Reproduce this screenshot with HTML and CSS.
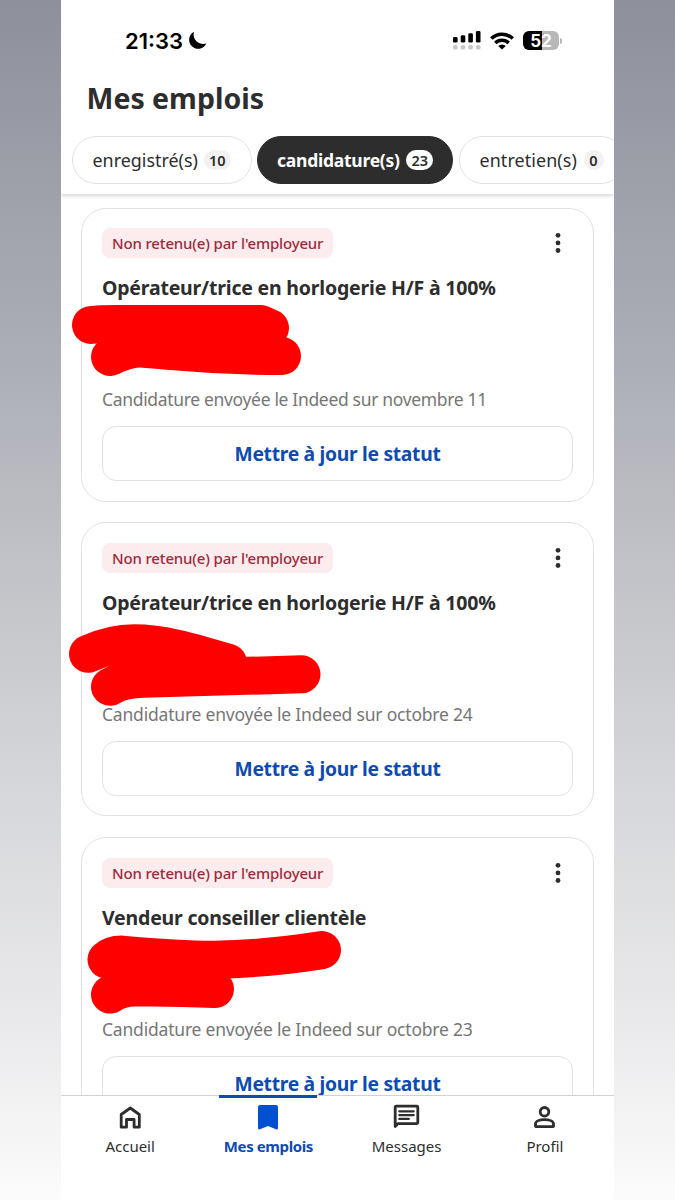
FILE: index.html
```
<!DOCTYPE html>
<html lang="fr">
<head>
    <meta charset="UTF-8">
    <meta name="viewport" content="width=device-width, initial-scale=1.0">
    <title>Mes emplois</title>
    <link rel="stylesheet" href="styles.css">
</head>
<body>
<div class="phone">

    <header class="header">
        <!-- Status bar -->
        <div class="status-bar">
            <span class="time">21:33</span>
            <svg class="moon" width="19" height="19" viewBox="0 0 19 19"><path d="M6 .8A9 9 0 1 0 18.3 12.6C10.500 14.500 4 8.500 6 .8z"/></svg>
            <div class="status-icons">
                <svg width="28" height="19" viewBox="0 0 28 19">
                    <rect x="0" y="6" width="4.6" height="5.6" rx="1.4"/>
                    <rect x="7.7" y="4.2" width="4.6" height="7.4" rx="1.4"/>
                    <rect x="15.3" y="2.2" width="4.6" height="9.4" rx="1.4"/>
                    <rect x="22.9" y="0" width="4.6" height="11.6" rx="1.4"/>
                    <g fill="#c9c9c9">
                        <rect x="0" y="14" width="4.6" height="4.6" rx="1.6"/>
                        <rect x="7.7" y="14" width="4.6" height="4.6" rx="1.6"/>
                        <rect x="15.3" y="14" width="4.6" height="4.6" rx="1.6"/>
                        <rect x="22.9" y="14" width="4.6" height="4.6" rx="1.6"/>
                    </g>
                </svg>
                <svg class="wifi" width="24" height="18" viewBox="0 0 24 18">
                    <g fill="none" stroke="#000" stroke-width="3.5">
                        <path d="M1.3 6.6a15.3 15.3 0 0 1 21.4 0"/>
                        <path d="M5.3 10.9a9.6 9.6 0 0 1 13.4 0"/>
                    </g>
                    <path d="M12 17.6 8.2 14a5.4 5.4 0 0 1 7.6 0z"/>
                </svg>
                <span class="battery">52</span>
                <span class="battery-tip"></span>
            </div>
        </div>

        <h1>Mes emplois</h1>

        <div class="tabs">
            <a class="tab tab-saved">enregistré(s) <span class="count">10</span></a>
            <a class="tab tab-applied active">candidature(s) <span class="count">23</span></a>
            <a class="tab tab-interview">entretien(s) <span class="count">0</span></a>
        </div>
    </header>

    <!-- Job list -->
    <main class="list">
        <article class="card">
            <div class="card-top">
                <span class="badge">Non retenu(e) par l'employeur</span>
                <svg class="more" width="6" height="22" viewBox="0 0 6 22"><circle cx="3" cy="3.3" r="2.4"/><circle cx="3" cy="10.9" r="2.4"/><circle cx="3" cy="18.5" r="2.4"/></svg>
            </div>
            <h2>Opérateur/trice en horlogerie H/F à 100%</h2>
            <p class="date date-nov">Candidature envoyée le Indeed sur novembre 11</p>
            <button>Mettre à jour le statut</button>
            <svg class="scribble" viewBox="61 295 300 90">
                <path d="M91 325Q99 324 118 324H261L270 328"/>
                <path d="M110 357Q128 348 141 348.5C180 351 205 356 282 356"/>
                <path d="M100 335H275V345H115z"/>
            </svg>
        </article>

        <article class="card">
            <div class="card-top">
                <span class="badge">Non retenu(e) par l'employeur</span>
                <svg class="more" width="6" height="22" viewBox="0 0 6 22"><circle cx="3" cy="3.3" r="2.4"/><circle cx="3" cy="10.9" r="2.4"/><circle cx="3" cy="18.5" r="2.4"/></svg>
            </div>
            <h2>Opérateur/trice en horlogerie H/F à 100%</h2>
            <p class="date">Candidature envoyée le Indeed sur octobre 24</p>
            <button>Mettre à jour le statut</button>
            <svg class="scribble" viewBox="61 609.7 300 90">
                <path d="M88 653.5Q112 643 134 643C162 643 190 651 228 662.5"/>
                <path d="M110 686.5Q122 679 143 678.5L301.5 674"/>
            </svg>
        </article>

        <article class="card">
            <div class="card-top">
                <span class="badge">Non retenu(e) par l'employeur</span>
                <svg class="more" width="6" height="22" viewBox="0 0 6 22"><circle cx="3" cy="3.3" r="2.4"/><circle cx="3" cy="10.9" r="2.4"/><circle cx="3" cy="18.5" r="2.4"/></svg>
            </div>
            <h2>Vendeur conseiller clientèle</h2>
            <p class="date">Candidature envoyée le Indeed sur octobre 23</p>
            <button>Mettre à jour le statut</button>
            <svg class="scribble" viewBox="61 924.4 300 90">
                <path d="M106.5 959Q112 954 122 954C190 960 235 963 322 949.5"/>
                <path d="M110 994Q121 987 135 987Q175 986.5 215 988.5"/>
            </svg>
        </article>
    </main>

    <!-- Bottom navigation -->
    <nav class="nav">
        <a class="nav-item">
            <svg width="28" height="28" viewBox="0 0 28 28"><path d="M5.2 24.200V11.500L14.300 5l9 6.500v12.700h-5.200v-7.700h-7.600v7.700z"/></svg>
            <span>Accueil</span>
        </a>
        <a class="nav-item active">
            <svg width="28" height="28" viewBox="0 0 28 28"><path d="M6 2.1h16a2 2 0 0 1 2 2v21q0 2-2 1.200l-8-3.400-8 3.400q-2 .8-2-1.200v-21a2 2 0 0 1 2-2z"/></svg>
            <span>Mes emplois</span>
        </a>
        <a class="nav-item">
            <svg width="28" height="28" viewBox="0 0 28 28"><path d="M2.200 23.500V4.200q0-1 1-1h20.600q1 0 1 1v15.400q0 1-1 1H5.100z"/><path d="M6.300 8.300h14.400M6.300 12.100h14.400M6.300 15.900h9.500" stroke-width="2.2"/></svg>
            <span>Messages</span>
        </a>
        <a class="nav-item">
            <svg width="28" height="28" viewBox="0 0 28 28"><circle cx="13.5" cy="8.800" r="4.300"/><path d="M4.500 23.200v-2.300c0-5.700 18-5.700 18 0v2.300q0 .4-.4.4H4.900q-.4 0-.4-.4z"/></svg>
            <span>Profil</span>
        </a>
    </nav>

</div>
</body>
</html>
```

FILE: styles.css
```
* { margin: 0; padding: 0; box-sizing: border-box; }

body {
    height: 1200px;
    overflow: hidden;
    background: linear-gradient(#8d8f9b 0, #9fa1ab 200px, #acaeb7 360px, #bdbec3 520px, #d5d6d9 780px, #ebebed 1040px, #fcfcfc 1200px);
    font-family: "Noto Sans", sans-serif;
    color: #2d2d2d;
}

.phone {
    display: flex;
    flex-direction: column;
    width: 553px;
    height: 1200px;
    margin-left: 61px;
    background: #fff;
    overflow: hidden;
}

/* Header */
.header {
    flex: none;
    height: 194px;
    position: relative;
    z-index: 1;
    background: #fff;
    box-shadow: 0 2px 4px rgba(0, 0, 0, 0.16);
}

.status-bar {
    display: flex;
    align-items: center;
    height: 81px;
    padding: 0 52px 0 64px;
}
.time { font: 600 22px/26px Inter, sans-serif; color: #000; }
.moon { margin-left: 5px; }
.status-icons { display: flex; align-items: center; margin-left: auto; }
.wifi { margin: 0 9px; }
.battery {
    width: 36px;
    height: 19px;
    border-radius: 6px;
    background: linear-gradient(90deg, #000 52%, #b8b8b8 52%);
    color: #fff;
    font: 700 17px/20px Inter, sans-serif;
    text-align: center;
}
.battery-tip { width: 2px; height: 6px; margin-left: 1px; border-radius: 0 2px 2px 0; background: #b8b8b8; }

h1 { padding-left: 25.5px; font-size: 28.5px; line-height: 35px; font-weight: 700; }

.tabs { display: flex; gap: 5.5px; margin-top: 20px; padding-left: 10.5px; }
.tab {
    flex: none;
    display: flex;
    align-items: center;
    justify-content: space-between;
    height: 48px;
    padding: 0 20px;
    border: 1px solid #e4e2e0;
    border-radius: 24px;
    font-size: 17.9px;
    white-space: nowrap;
}
.tab-saved { width: 180px; }
.tab-applied { width: 196px; padding: 0 19px; }
.tab-interview { width: 166px; letter-spacing: 0.1px; }
.tab.active { background: #2d2d2d; border-color: #2d2d2d; color: #fff; font-size: 17.5px; font-weight: 700; letter-spacing: -0.25px; }
.count {
    min-width: 20px;
    padding: 0 5px;
    border-radius: 10px;
    background: #f3f2f1;
    color: #2d2d2d;
    font-size: 14.5px;
    font-weight: 600;
    line-height: 20px;
    letter-spacing: 0;
    text-align: center;
}
.tab.active .count { background: #fff; }

/* Job cards */
.list { flex: 1; min-height: 0; overflow: hidden; padding: 13.7px 20px 0; }
.card {
    position: relative;
    height: 294px;
    margin-bottom: 20.7px;
    padding: 19.5px 20px 0;
    border: 1px solid #e4e2e0;
    border-radius: 25px;
}
.card-top { display: flex; justify-content: space-between; height: 30px; }
.badge {
    padding: 0 10px;
    border-radius: 8px;
    background: #fdecee;
    color: #9d2b3c;
    font-size: 15px;
    font-weight: 500;
    line-height: 30px;
    letter-spacing: -0.16px;
}
.more { margin: 4px 12px 0 0; fill: #2d2d2d; }
h2 { margin-top: 16px; font-size: 19.5px; line-height: 28px; font-weight: 700; letter-spacing: -0.2px; white-space: nowrap; }
.date { margin-top: 84px; font-size: 17.5px; line-height: 26px; letter-spacing: -0.2px; color: #767676; white-space: nowrap; }
.date-nov { letter-spacing: -0.33px; }
.card button {
    display: block;
    width: 100%;
    height: 55px;
    margin-top: 14px;
    border: 1px solid #e4e2e0;
    border-radius: 14px;
    background: #fff;
    color: #0d4bb0;
    font: 700 19.3px "Noto Sans", sans-serif;
    letter-spacing: -0.3px;
}

.scribble { position: absolute; left: -21px; top: 86.5px; width: 300px; height: 90px; overflow: visible; }
.scribble path { fill: none; stroke: #ff0000; stroke-width: 38px; stroke-linecap: round; stroke-linejoin: round; }
.scribble path:nth-child(3) { fill: #ff0000; stroke: none; }

/* Bottom navigation */
.nav { flex: none; display: flex; height: 105px; border-top: 1px solid #d4d2d0; background: #fff; }
.nav-item { position: relative; flex: 1; display: flex; flex-direction: column; align-items: center; padding-top: 7px; font-size: 15px; }
.nav-item span { margin-top: 4px; line-height: 22px; }
.nav-item svg { fill: none; stroke: #2d2d2d; stroke-width: 2.8; stroke-linejoin: round; stroke-linecap: round; }
.nav-item.active { color: #0d4bb0; font-weight: 700; letter-spacing: -0.4px; }
.nav-item.active svg { fill: #0050d0; stroke: none; }
.nav-item.active::before { content: ""; position: absolute; top: -1px; width: 98px; height: 3px; background: #0d4bb0; }
```
